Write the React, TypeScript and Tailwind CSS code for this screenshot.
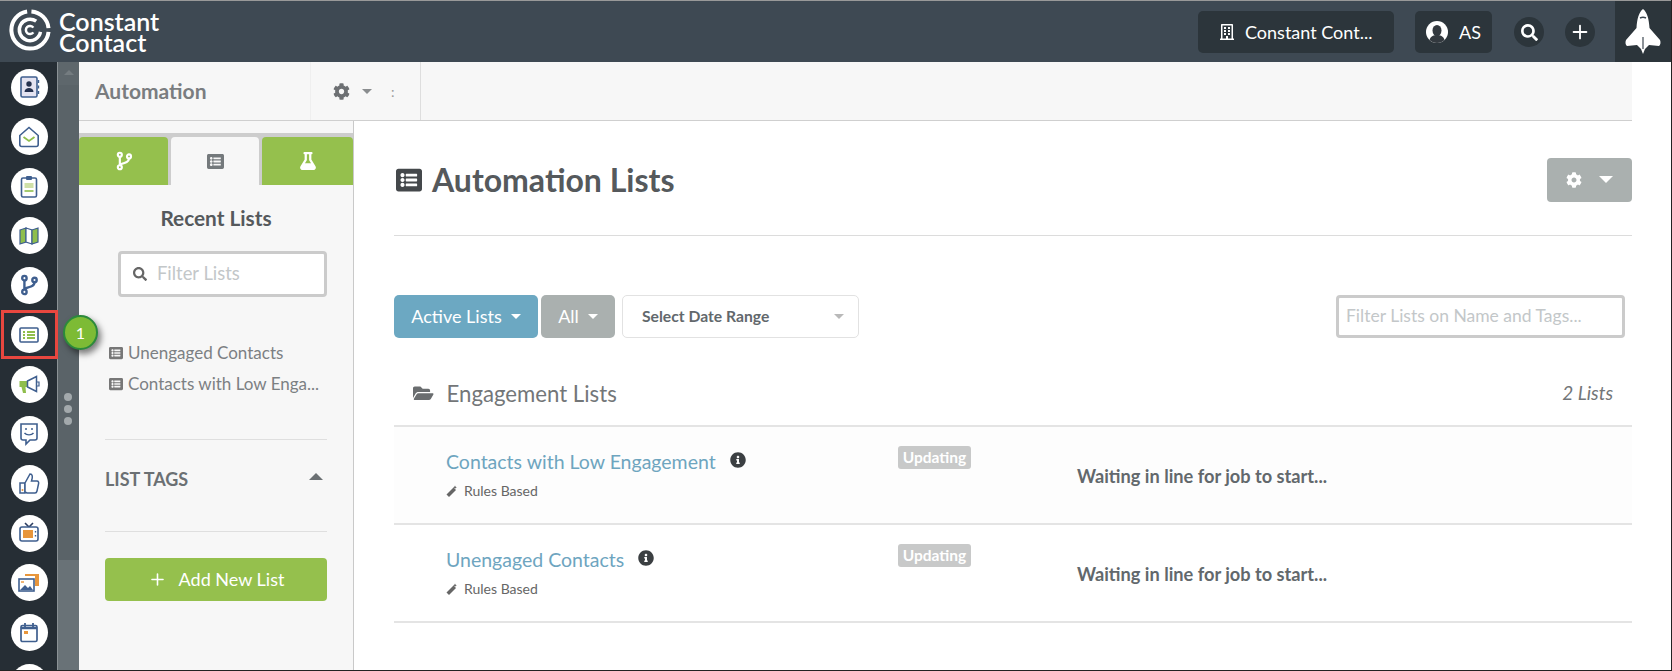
import { Plus } from "lucide-react";
import { FaCog, FaFlask, FaFolderOpen, FaInfoCircle, FaListAlt, FaRegBuilding, FaSearch } from "react-icons/fa";

const blue = "#3f5f8f";
const green = "#8fbe4c";
const orange = "#e8963c";

const Logo = () => (
  <svg width="42" height="42" viewBox="0 0 44 44" fill="none" stroke="#fff" className="mb-[3px]">
    <path d="M23.500 2.500A19.500 19.500 0 0 1 41.400 20" strokeWidth="4.200" />
    <path d="M41.400 24A19.500 19.500 0 1 1 19 2.700" strokeWidth="4.200" />
    <path d="M33 24A11.200 11.200 0 1 1 28.500 12.800" strokeWidth="3.600" />
    <path d="M25.500 24.500A4.300 4.300 0 1 1 25.500 19.500" strokeWidth="2.600" />
  </svg>
);

const Branch = ({ color, size = 22 }: { color: string; size?: number }) => (
  <svg width={size} height={size} viewBox="0 0 24 24" fill="none" stroke={color} strokeWidth="2.600">
    <circle cx="7" cy="4.500" r="2.400" />
    <circle cx="7" cy="19.500" r="2.400" />
    <circle cx="18" cy="6.500" r="2.400" />
    <path d="M7 7v10M18 9c0 4-4 5-11 7" />
  </svg>
);

const navIcons = [
  <svg width="21" height="22" viewBox="0 0 21 22" key="contacts">
    <rect x="2" y="1" width="16" height="20" rx="1.500" fill="#e4e3f1" stroke={blue} strokeWidth="1.600" />
    <circle cx="10" cy="8" r="2.700" fill="#26324f" />
    <path d="M5.500 16c0-5.500 9-5.500 9 0z" fill="#26324f" />
    <path d="M19.500 4v3M19.500 9.500v3M19.500 15v3" stroke={blue} strokeWidth="1.400" />
  </svg>,
  <svg width="22" height="22" viewBox="0 0 22 22" fill="none" key="mail">
    <path d="M1.800 9.500L11 1.500l9.200 8v9a2 2 0 0 1-2 2H3.800a2 2 0 0 1-2-2z" stroke={blue} strokeWidth="1.600" />
    <path d="M5.500 11l5.500 4 5.500-4" stroke={green} strokeWidth="1.800" />
  </svg>,
  <svg width="18" height="23" viewBox="0 0 18 23" key="clip">
    <rect x="1.500" y="3" width="15" height="19" rx="1.500" fill="#fff" stroke={blue} strokeWidth="1.600" />
    <rect x="6" y="1" width="6" height="4" rx="1" fill={blue} />
    <rect x="4.500" y="8" width="9" height="5" fill="#cfe0a8" />
    <path d="M4.500 16h9" stroke={green} strokeWidth="1.600" />
  </svg>,
  <svg width="22" height="20" viewBox="0 0 22 20" key="map">
    <path d="M2 4l6-2v14l-6 2z" fill={green} stroke={blue} strokeWidth="1.200" />
    <path d="M8 2l6 2v14l-6-2z" fill="#fff" stroke={blue} strokeWidth="1.200" />
    <path d="M14 4l6-2v14l-6 2z" fill={green} stroke={blue} strokeWidth="1.200" />
  </svg>,
  <Branch color={blue} key="branch" />,
  <svg width="20" height="20" viewBox="0 0 20 20" key="list">
    <rect x="1" y="3" width="18" height="14" rx="1" fill="none" stroke={blue} strokeWidth="1.600" />
    <path d="M4 7h2M4 10h2M4 13h2M8 7h8M8 10h8M8 13h8" stroke={green} strokeWidth="1.800" />
  </svg>,
  <svg width="22" height="20" viewBox="0 0 22 20" key="horn">
    <path d="M1.500 6h8v6h-8z" fill={green} />
    <path d="M9.500 6l9-4.500v15l-9-4.500z" fill="#fff" stroke={blue} strokeWidth="1.500" />
    <path d="M18.500 7h2.500v4h-2.500" fill="none" stroke={blue} strokeWidth="1.200" />
    <path d="M3.500 12h4l.5 6H5z" fill={green} />
  </svg>,
  <svg width="20" height="24" viewBox="0 0 20 24" fill="none" key="chat">
    <path d="M2 2h16v14a2 2 0 0 1-2 2h-5l-4 4v-4H4a2 2 0 0 1-2-2z" stroke={blue} strokeWidth="1.600" />
    <circle cx="7" cy="7" r="1" fill={blue} />
    <circle cx="13" cy="7" r="1" fill={blue} />
    <path d="M5.500 11c2 2.500 7 2.500 9 0" stroke={blue} strokeWidth="1.400" />
  </svg>,
  <svg width="22" height="23" viewBox="0 0 22 23" key="thumb">
    <path d="M2 11h5v10H2z" fill="#fff" stroke={blue} strokeWidth="1.500" />
    <circle cx="4.500" cy="18" r="1" fill={orange} />
    <path d="M7 11l5-9c2.500 0 3 2.500 1.500 7H19c1.500 0 2 1.500 1.500 3l-1.500 7c-.3 1.500-1 2-2 2H9l-2-1z" fill="#fff" stroke={blue} strokeWidth="1.500" />
  </svg>,
  <svg width="22" height="22" viewBox="0 0 22 22" key="tv">
    <path d="M7 1l4 4 4-4" fill="none" stroke="#2e3f63" strokeWidth="1.600" />
    <rect x="2" y="5" width="18" height="14" rx="2" fill="#fff" stroke={blue} strokeWidth="1.600" />
    <rect x="5" y="8" width="10" height="8" fill={orange} />
    <path d="M17.500 9v1.500M17.500 13v1.500" stroke={blue} strokeWidth="1.400" />
  </svg>,
  <svg width="24" height="22" viewBox="0 0 24 22" key="pics">
    <path d="M8 3h13v9" fill="none" stroke={orange} strokeWidth="2" />
    <rect x="18" y="2" width="4" height="12" fill={orange} />
    <rect x="2" y="7" width="15" height="12" fill="#fff" stroke={blue} strokeWidth="1.600" />
    <path d="M3 18l5-5 3 3 2-2 3 4z" fill={blue} />
    <path d="M4 10h3" stroke={orange} strokeWidth="1.400" />
  </svg>,
  <svg width="20" height="22" viewBox="0 0 20 22" key="cal">
    <rect x="2" y="3.500" width="16" height="16" rx="1.500" fill="#fff" stroke={blue} strokeWidth="1.700" />
    <path d="M2 6h16" stroke={blue} strokeWidth="2.500" />
    <path d="M6 1v4M14 1v4" stroke={blue} strokeWidth="1.800" />
    <rect x="5" y="9" width="4" height="3" fill={orange} />
  </svg>,
  <svg width="20" height="20" viewBox="0 0 20 20" key="extra">
    <circle cx="10" cy="10" r="8" fill="none" stroke={blue} strokeWidth="1.600" />
  </svg>,
];

const Caret = ({ className }: { className: string }) => (
  <span className={`inline-block h-0 w-0 border-x-[5px] border-t-[5px] border-x-transparent ${className}`} />
);

const Wand = () => (
  <svg width="12" height="12" viewBox="0 0 12 12" fill="#666">
    <path d="M0.500 9.500L7.500 2.500l2.500 2.500-7 7z" />
    <path d="M9 0.500l.6 1.200 1.200.6-1.200.6-.6 1.200-.6-1.200-1.200-.6 1.200-.6z" />
  </svg>
);

const Row = ({ name, className }: { name: string; className?: string }) => (
  <div className={`flex h-[98px] border-b-2 border-[#e4e4e4] ${className ?? ""}`}>
    <div className="w-[504px] pl-[52px] pt-[22px]">
      <div className="flex items-center">
        <a className="text-[19.500px] leading-[26px] text-[#6ea5bf]">{name}</a>
        <FaInfoCircle className="mb-[4px] ml-[14px] text-[16px] text-[#3b3f42]" />
      </div>
      <div className="mt-[7px] flex items-center gap-[6px] text-[14px] leading-[18px] text-[#666]">
        <Wand />
        Rules Based
      </div>
    </div>
    <div className="pt-[19px]">
      <span className="block h-[23px] w-[73px] rounded-[3px] bg-[#c8c9c9] text-center text-[15.500px] font-bold leading-[22px] text-white">Updating</span>
    </div>
    <div className="ml-[106px] pt-[37px] text-[18.200px] font-bold leading-[24px] text-[#62686c]">Waiting in line for job to start...</div>
  </div>
);

const App = () => {
  return (
    <div className="relative flex h-[671px] w-[1672px] flex-col overflow-hidden border-r border-b border-[#222] bg-white font-['Lato',sans-serif]">
      <header className="flex h-[62px] shrink-0 items-center border-t border-[#999] bg-[#3e4953] pl-[9px]">
        <Logo />
        <div className="ml-[8px] text-[25px] font-semibold leading-[21px] text-white">
          Constant
          <br />
          Contact
        </div>
        <div className="ml-auto mt-[1px] flex h-[42px] w-[196px] items-center gap-[10px] rounded-[5px] bg-[#2c353b] pl-[21px] text-[18px] text-white">
          <FaRegBuilding className="text-[16px]" />
          Constant Cont...
        </div>
        <div className="ml-[21px] mt-[1px] flex h-[42px] w-[77px] items-center gap-[11px] rounded-[5px] bg-[#2c353b] pl-[11px] text-[18px] text-white">
          <svg width="22" height="22" viewBox="0 0 22 22">
            <circle cx="11" cy="11" r="11" fill="#fff" />
            <ellipse cx="11" cy="9.500" rx="4.500" ry="5.500" fill="#33393f" />
            <path d="M3.500 19c1-4 4.500-5 7.500-5s6.500 1 7.500 5c-2 2-4.500 3-7.500 3s-5.500-1-7.500-3z" fill="#33393f" />
          </svg>
          AS
        </div>
        <div className="ml-[22px] mt-[1px] flex h-[30px] w-[30px] items-center justify-center rounded-full bg-[#2c353b] text-[17px] text-white">
          <FaSearch />
        </div>
        <div className="ml-[21px] mt-[1px] flex h-[30px] w-[30px] items-center justify-center rounded-full bg-[#2c353b] text-white">
          <Plus size={22} strokeWidth={2} />
        </div>
        <div className="ml-[20px] flex h-full w-[56px] items-center justify-center bg-[#2c353b]">
          <svg width="36" height="46" viewBox="0 0 36 46" fill="#fff">
            <path d="M18 0c4 3 6 10 6.500 19L35 31c1 2 .5 5-1 6l-10-1-4 4-2 5-2-5-4-4-10 1c-1.500-1-2-4-1-6l10.500-12C12 10 14 3 18 0z" />
            <path d="M18 28v12" stroke="#3e4953" strokeWidth="1.200" />
            <path d="M15 9c2-1 4-1 6 0" stroke="#3e4953" strokeWidth="1.500" fill="none" />
          </svg>
        </div>
      </header>

      <div className="flex min-h-0 flex-1">
        <nav className="flex w-[57px] shrink-0 flex-col items-center gap-[12.600px] overflow-hidden bg-[#262e35] pl-[1px] pt-[6.500px]">
          {navIcons.map((icon, i) => (
            <div
              key={i}
              className={`flex h-[37px] w-[37px] shrink-0 items-center justify-center rounded-full ${
                i === 0
                  ? "bg-[radial-gradient(circle,#fff_68%,#e6e6ee_100%)]"
                  : i < 7
                    ? "bg-[radial-gradient(circle,#fff_68%,#e5eed6_100%)]"
                    : "bg-[radial-gradient(circle,#fff_68%,#f6e9da_100%)]"
              }`}
            >
              {icon}
            </div>
          ))}
        </nav>

        <div className="flex w-[22px] shrink-0 flex-col border-l border-[#8b9296] bg-[#5e676c]">
          <div className="flex h-[23px] items-start justify-center pt-[8px]">
            <Caret className="rotate-180 border-t-[#747c80]" />
          </div>
          <div className="flex h-[475px] flex-col items-center gap-[4px] bg-[#5a6368] pr-[2px] pt-[308px]">
            <span className="h-[8px] w-[8px] rounded-full bg-[#a3a9ac]" />
            <span className="h-[8px] w-[8px] rounded-full bg-[#a3a9ac]" />
            <span className="h-[8px] w-[8px] rounded-full bg-[#a3a9ac]" />
          </div>
          <div className="flex-1 bg-[#697277]" />
        </div>

        <div className="flex min-w-0 flex-1 flex-col pr-[39px]">
          <div className="flex h-[59px] shrink-0 items-center border-b border-[#cfcfcf] bg-[#f7f7f7]">
            <div className="flex h-full w-[232px] items-center border-r border-[#efefef] pl-[16px] text-[21px] font-bold text-[#7a7d80]">Automation</div>
            <div className="flex h-full w-[110px] items-center border-r border-[#dedede] pl-[22px] text-[#6d7073]">
              <FaCog className="text-[17px]" />
              <Caret className="ml-[12px] border-t-[#8a8d8f]" />
              <span className="ml-[19px] text-[14px] text-[#9a9a9a]">:</span>
            </div>
          </div>

          <div className="flex min-h-0 flex-1">
            <aside className="w-[275px] shrink-0 border-r border-[#c9c9c9] bg-[#f7f7f7]">
              <div className="mt-[12px] flex h-[52px] gap-[3px] border-t-4 border-[#cdcdcd] bg-[#cdcdcd]">
                <div className="flex w-[89px] items-center justify-center rounded-t-[4px] bg-[#95c04d]">
                  <Branch color="#fff" size={20} />
                </div>
                <div className="flex w-[88px] items-center justify-center rounded-t-[4px] bg-[#f7f7f7] text-[17px] text-[#74797c]">
                  <FaListAlt />
                </div>
                <div className="flex flex-1 items-center justify-center rounded-t-[4px] bg-[#95c04d] text-[18px] text-white">
                  <FaFlask />
                </div>
              </div>
              <h3 className="mt-[20px] text-center text-[20.800px] font-bold leading-[26px] text-[#55595c]">Recent Lists</h3>
              <div className="ml-[39px] mt-[20px] flex h-[46px] w-[209px] items-center gap-[10px] rounded-[4px] border-[3px] border-[#cbcbcb] bg-white pl-[12px] text-[18.400px] text-[#c3c7c9]">
                <FaSearch className="text-[14px] text-[#666]" />
                Filter Lists
              </div>
              <ul className="ml-[30px] mt-[45px] flex flex-col gap-[9px] text-[17px] leading-[22px] text-[#7c8083]">
                <li className="flex items-center gap-[5px]">
                  <FaListAlt className="text-[14px] text-[#777]" />
                  Unengaged Contacts
                </li>
                <li className="flex items-center gap-[5px]">
                  <FaListAlt className="text-[14px] text-[#777]" />
                  Contacts with Low Enga...
                </li>
              </ul>
              <div className="mx-[26px] mt-[44px] flex h-[93px] items-center justify-between border-y border-[#dfdfdf] pb-[12px] pr-[4px] text-[18px] font-bold text-[#6b7073]">
                LIST TAGS
                <Caret className="mb-[6px] rotate-180 border-x-[7px] border-t-[7px] border-t-[#6b7073]" />
              </div>
              <button className="ml-[26px] mt-[26px] flex h-[43px] w-[222px] items-center justify-center gap-[12px] rounded-[4px] bg-[#95c04d] text-[18px] text-white">
                <Plus size={19} strokeWidth={2} />
                Add New List
              </button>
            </aside>

            <main className="min-w-0 flex-1 bg-white pl-[40px]">
              <div className="flex h-[115px] items-center justify-between border-b border-[#dcdcdc]">
                <h1 className="flex items-center gap-[10px] pl-[2px] pt-[4px] text-[32px] font-bold text-[#55595c]">
                  <FaListAlt className="text-[26px] text-[#44484b]" />
                  Automation Lists
                </h1>
                <div className="mt-[3px] flex h-[44px] w-[85px] items-center justify-center gap-[17px] rounded-[4px] bg-[#aab0af] text-white">
                  <FaCog className="text-[16px]" />
                  <Caret className="border-x-[7px] border-t-[7px] border-t-white" />
                </div>
              </div>

              <div className="mt-[59px] flex h-[43px] items-stretch">
                <button className="flex w-[144px] items-center justify-center gap-[9px] rounded-[5px] bg-[#6ca8c2] text-[18px] text-white">
                  Active Lists
                  <Caret className="border-t-white" />
                </button>
                <button className="ml-[3px] flex w-[74px] items-center justify-center gap-[9px] rounded-[5px] bg-[#aab0af] text-[18px] text-white">
                  All
                  <Caret className="border-t-white" />
                </button>
                <div className="ml-[7px] flex w-[237px] items-center justify-between rounded-[5px] border border-[#e2e2e2] pl-[19px] pr-[14px] text-[15.700px] font-bold text-[#62686c]">
                  Select Date Range
                  <Caret className="border-t-[#b9b9b9]" />
                </div>
                <div className="ml-auto mr-[7px] flex w-[289px] items-center rounded-[4px] border-[3px] border-[#cbcbcb] pl-[7px] text-[17.500px] text-[#c3c7c9]">
                  Filter Lists on Name and Tags...
                </div>
              </div>

              <div className="mt-[33px] flex h-[56px] items-center border-b-2 border-[#e4e4e4] px-[19px] pb-[9px] text-[#737678]">
                <FaFolderOpen className="text-[20.500px] text-[#6a6d6f]" />
                <span className="ml-[13px] text-[22.200px]">Engagement Lists</span>
                <span className="ml-auto text-[19px] italic">2 Lists</span>
              </div>

              <Row name="Contacts with Low Engagement" className="bg-[#fdfdfd]" />
              <Row name="Unengaged Contacts" />
            </main>
          </div>
        </div>
      </div>

      <div className="pointer-events-none absolute left-[1px] top-[310px] h-[49px] w-[57px] border-[3px] border-[#e8473f]" />
      <div className="pointer-events-none absolute left-[63px] top-[315px] flex h-[35px] w-[35px] items-center justify-center rounded-full border-2 border-[#2c8a3c] bg-[#7dbb35] text-[16px] text-white shadow-[3px_4px_6px_rgba(0,0,0,0.5)]">1</div>
    </div>
  );
};

export default App;
